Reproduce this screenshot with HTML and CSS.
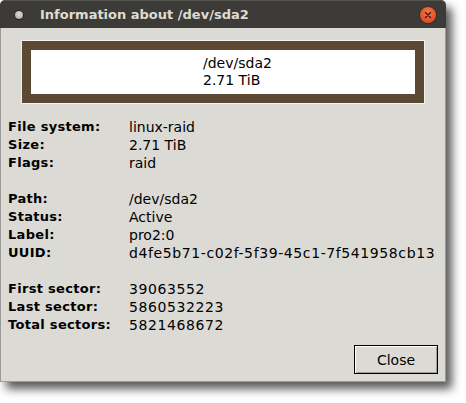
FILE: index.html
```html
<!DOCTYPE html>
<html>
<head>
<meta charset="utf-8">
<link rel="stylesheet" href="styles.css">
</head>
<body>
<div class="window">
  <div class="titlebar">
    <span class="menu-dot"></span>
    <span class="title">Information about /dev/sda2</span>
    <span class="close-btn">
      <svg width="16" height="16" viewBox="0 0 16 16"><path d="M5.5 5.5 L10.5 10.5 M10.5 5.5 L5.5 10.5" stroke="#3a1a10" stroke-width="1.4" stroke-linecap="round"/></svg>
    </span>
  </div>
  <div class="content">
    <div class="part-frame">
      <div class="part-inner">
        <div class="part-text">/dev/sda2<br>2.71 TiB</div>
      </div>
    </div>
    <div class="info">
      <span class="lbl">File system:</span><span class="val">linux-raid</span>
      <span class="lbl">Size:</span><span class="val">2.71 TiB</span>
      <span class="lbl">Flags:</span><span class="val">raid</span>
      <span class="gap"></span><span class="gap"></span>
      <span class="lbl">Path:</span><span class="val">/dev/sda2</span>
      <span class="lbl">Status:</span><span class="val">Active</span>
      <span class="lbl">Label:</span><span class="val">pro2:0</span>
      <span class="lbl">UUID:</span><span class="val num">d4fe5b71-c02f-5f39-45c1-7f541958cb13</span>
      <span class="gap"></span><span class="gap"></span>
      <span class="lbl">First sector:</span><span class="val num">39063552</span>
      <span class="lbl">Last sector:</span><span class="val num">5860532223</span>
      <span class="lbl">Total sectors:</span><span class="val num">5821468672</span>
    </div>
    <div class="actions">
      <button class="btn">Close</button>
    </div>
  </div>
</div>
</body>
</html>
```

FILE: styles.css
```css
html, body {
  margin: 0;
  padding: 0;
  background: #ffffff;
}
body {
  width: 466px;
  height: 403px;
  overflow: hidden;
}
.window {
  width: 446px;
  height: 382px;
  box-sizing: border-box;
  display: flex;
  flex-direction: column;
  background: #dcdad5;
  border-radius: 5px 5px 0 0;
  box-shadow: 6px 7px 10px rgba(0, 0, 0, 0.65);
}
.titlebar {
  height: 28px;
  flex: none;
  display: flex;
  align-items: center;
  background: #3c3b37;
  border-top: 1px solid #55534d;
  box-sizing: border-box;
  border-radius: 5px 5px 0 0;
  padding: 0 10px 0 15px;
}
.menu-dot {
  width: 8px;
  height: 8px;
  border-radius: 50%;
  background: radial-gradient(circle at 50% 40%, #e0ded9 0, #b8b6b0 60%, #8c8a85 100%);
  box-shadow: 0 1px 0 #24231f, 0 0 0 1px #2a2925;
  flex: none;
}
.title {
  margin-left: 17px;
  font-family: "DejaVu Sans", sans-serif;
  font-weight: bold;
  font-size: 13px;
  color: #dfdbd2;
  flex: 1;
  white-space: nowrap;
}
.close-btn {
  width: 16px;
  height: 16px;
  border-radius: 50%;
  background: radial-gradient(circle at 50% 35%, #f27a4f 0, #e4532b 60%, #c9441f 100%);
  box-shadow: 0 0 0 1px #4a2a1e;
  display: flex;
  flex: none;
}
.content {
  flex: 1;
  display: flex;
  flex-direction: column;
  border: 1px solid #9c9a95;
  border-top: none;
  font-family: "DejaVu Sans", sans-serif;
  color: #000;
}
.part-frame {
  margin: 12px 0 0 20px;
  width: 404px;
  box-sizing: border-box;
  border: 1px solid #f3f2ef;
  background: #5b4934;
  padding: 9px;
}
.part-inner {
  background: #ffffff;
  height: 44px;
  display: flex;
  align-items: center;
}
.part-text {
  margin-left: 172px;
  font-size: 14px;
  line-height: 17px;
}
.info {
  margin: 14px 0 0 7px;
  display: grid;
  grid-template-columns: 121px auto;
  grid-auto-rows: 18px;
  font-size: 14px;
  line-height: 18px;
}
.lbl {
  font-weight: bold;
  font-size: 13px;
  letter-spacing: 0.3px;
}
.num {
  letter-spacing: 0.6px;
}
.actions {
  margin-top: auto;
  display: flex;
  justify-content: flex-end;
  padding: 0 7px 7px 0;
}
.btn {
  width: 84px;
  height: 29px;
  font-family: "DejaVu Sans", sans-serif;
  font-size: 14px;
  color: #000;
  background: #dcdad5;
  border: 1px solid #000;
  box-shadow: inset 1px 1px 0 #ffffff, inset -1px -1px 0 #a09e99;
  padding: 0;
}
```
